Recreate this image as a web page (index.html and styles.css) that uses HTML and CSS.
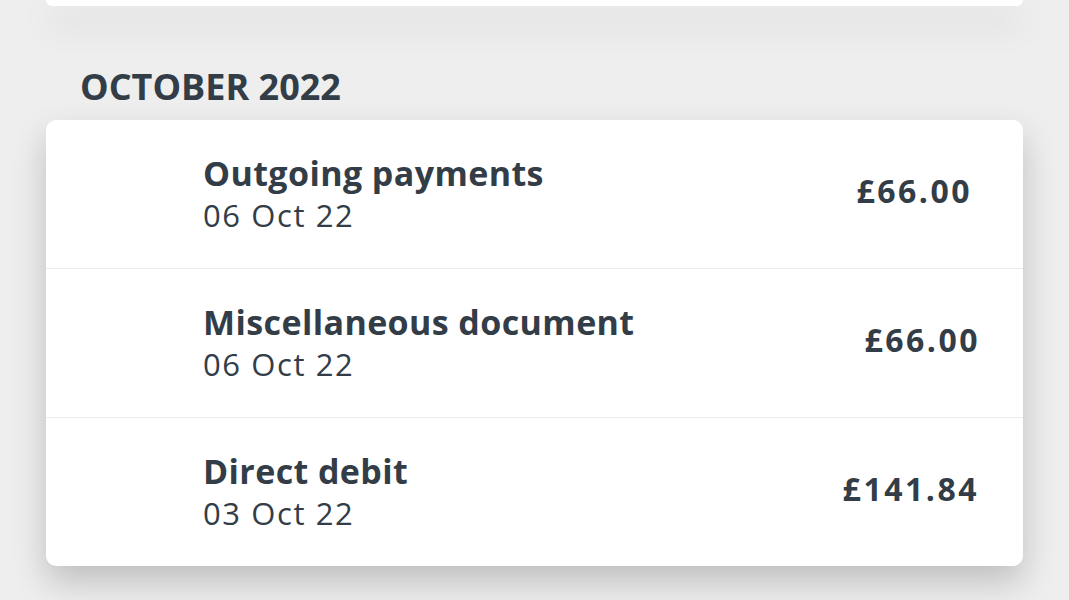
FILE: index.html
```html
<!DOCTYPE html>
<html lang="en">
<head>
<meta charset="utf-8">
<title>Transactions</title>
<link rel="stylesheet" href="styles.css">
</head>
<body>
<div class="page">
  <div class="card card-top"></div>
  <h2 class="month">OCTOBER 2022</h2>
  <div class="card list">
    <div class="row">
      <div class="info">
        <div class="title">Outgoing payments</div>
        <div class="date">06 Oct 22</div>
      </div>
      <div class="amount amount-a">£66.00</div>
    </div>
    <div class="row">
      <div class="info">
        <div class="title">Miscellaneous document</div>
        <div class="date">06 Oct 22</div>
      </div>
      <div class="amount amount-b">£66.00</div>
    </div>
    <div class="row">
      <div class="info">
        <div class="title">Direct debit</div>
        <div class="date">03 Oct 22</div>
      </div>
      <div class="amount amount-c">£141.84</div>
    </div>
  </div>
</div>
</body>
</html>
```
FILE: styles.css
```css
html, body {
  margin: 0;
  padding: 0;
  background: #eeeeee;
  font-family: "Open Sans", "Noto Sans", sans-serif;
  color: #333d47;
}
.page {
  padding: 0 46px;
  overflow: hidden;
  height: 600px;
}
.card {
  background: #ffffff;
  border-radius: 10px;
  box-shadow: 0 16px 34px rgba(0, 0, 0, 0.2);
}
.card-top {
  height: 6px;
  border-radius: 0 0 10px 10px;
}
.month {
  margin: 0;
  padding: 59px 0 11px 34px;
  font-size: 36px;
  line-height: 44px;
  font-weight: 700;
}
.row {
  display: flex;
  align-items: center;
  justify-content: space-between;
  height: 148px;
  padding-left: 157px;
  border-top: 1px solid #ececec;
}
.row:first-child {
  border-top: none;
}
.info {
  display: flex;
  flex-direction: column;
}
.title {
  font-size: 34px;
  font-weight: 700;
  line-height: 42px;
  letter-spacing: 0.4px;
}
.date {
  font-size: 31px;
  font-weight: 400;
  line-height: 42px;
  letter-spacing: 1.6px;
}
.amount {
  font-size: 32px;
  font-weight: 700;
  letter-spacing: 2.5px;
  margin-bottom: 8px;
}
.amount-a { margin-right: 51px; }
.amount-b { margin-right: 43px; }
.amount-c { margin-right: 44px; }
```
